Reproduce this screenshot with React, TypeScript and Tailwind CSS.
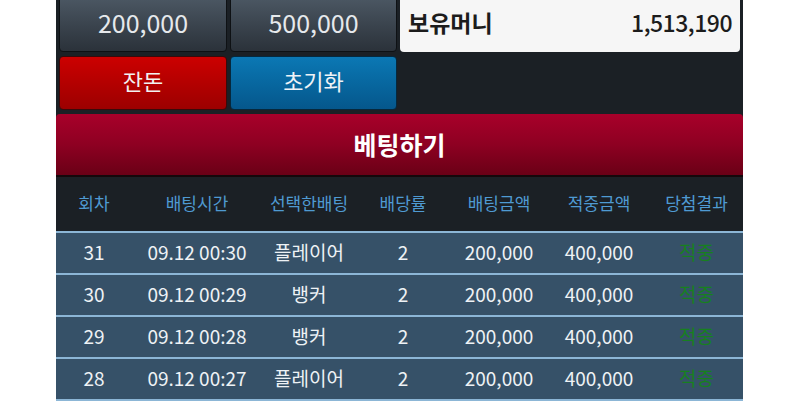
import React from "react";

interface BetRow {
  round: number;
  time: string;
  pick: string;
  odds: number;
  amount: string;
  win: string;
  result: string;
}

const rows: BetRow[] = [
  { round: 31, time: "09.12 00:30", pick: "플레이어", odds: 2, amount: "200,000", win: "400,000", result: "적중" },
  { round: 30, time: "09.12 00:29", pick: "뱅커", odds: 2, amount: "200,000", win: "400,000", result: "적중" },
  { round: 29, time: "09.12 00:28", pick: "뱅커", odds: 2, amount: "200,000", win: "400,000", result: "적중" },
  { round: 28, time: "09.12 00:27", pick: "플레이어", odds: 2, amount: "200,000", win: "400,000", result: "적중" },
];

const headers = ["회차", "배팅시간", "선택한배팅", "배당률", "배팅금액", "적중금액", "당첨결과"];

const gridCols = "grid grid-cols-[76px_130px_94px_94px_98px_102px_93px]";

export default function App() {
  return (
    <div
      className="h-[401px] w-[800px] overflow-hidden bg-white"
      style={{ fontFamily: '"Noto Sans CJK KR", "Noto Sans", sans-serif' }}
    >
      <div className="ml-[56px] w-[687px] bg-[#1b2025]">
        {/* amount buttons + balance */}
        <div className="grid grid-cols-[168px_167px_340px] gap-x-[3px] gap-y-[4px] px-[3px]">
          <button className="-mt-[4px] flex h-[56px] items-center justify-center rounded-[4px] border border-[#0e1114] bg-gradient-to-b from-[#4c5864] to-[#2b323a] pb-[3px] text-[25px] text-[#e6e9ec]">
            200,000
          </button>
          <button className="-mt-[4px] flex h-[56px] items-center justify-center rounded-[4px] border border-[#0e1114] bg-gradient-to-b from-[#4c5864] to-[#2b323a] pb-[3px] text-[25px] text-[#e6e9ec]">
            500,000
          </button>
          <div className="-mt-[4px] flex h-[56px] items-center justify-between rounded-[4px] bg-[#f6f6f6] px-[8px] pb-[3px] text-[#1c1c1c]">
            <span className="text-[23px] font-semibold">보유머니</span>
            <span className="text-[23px] font-medium tracking-[-0.5px]">1,513,190</span>
          </div>
          <button className="flex h-[54px] items-center justify-center rounded-[4px] border border-[#3a0a0a] bg-gradient-to-b from-[#cc0000] to-[#9c0000] pb-[5px] text-[22px] text-[#f2f2f2]">
            잔돈
          </button>
          <button className="flex h-[54px] items-center justify-center rounded-[4px] border border-[#06283d] bg-gradient-to-b from-[#0b78b4] to-[#05578c] pb-[5px] text-[22px] text-[#eef3f7]">
            초기화
          </button>
          <div />
        </div>

        {/* bet button */}
        <div className="mt-[4px] flex h-[63px] items-center justify-center rounded-t-[4px] border-b-2 border-[#14080b] bg-gradient-to-b from-[#a8002a] via-[#8e0022] to-[#6a0016] text-[25px] font-bold text-white">
          베팅하기
        </div>

        {/* history table */}
        <div className={`${gridCols} h-[54px] items-center pb-[2px] text-[17px] text-[#4f9ad2]`}>
          {headers.map(h => (
            <div key={h} className="text-center">
              {h}
            </div>
          ))}
        </div>
        {rows.map(r => (
          <div
            key={r.round}
            className={`${gridCols} h-[42px] items-center border-t-2 border-[#8cb6d6] bg-[#365168] pb-[2px] text-[19px] text-[#eef2f5]`}
          >
            <div className="text-center">{r.round}</div>
            <div className="text-center">{r.time}</div>
            <div className="text-center">{r.pick}</div>
            <div className="text-center">{r.odds}</div>
            <div className="text-center">{r.amount}</div>
            <div className="text-center">{r.win}</div>
            <div className="text-center text-[#17801f]">{r.result}</div>
          </div>
        ))}
        <div className="h-[2px] bg-[#8cb6d6]" />
      </div>
    </div>
  );
}
